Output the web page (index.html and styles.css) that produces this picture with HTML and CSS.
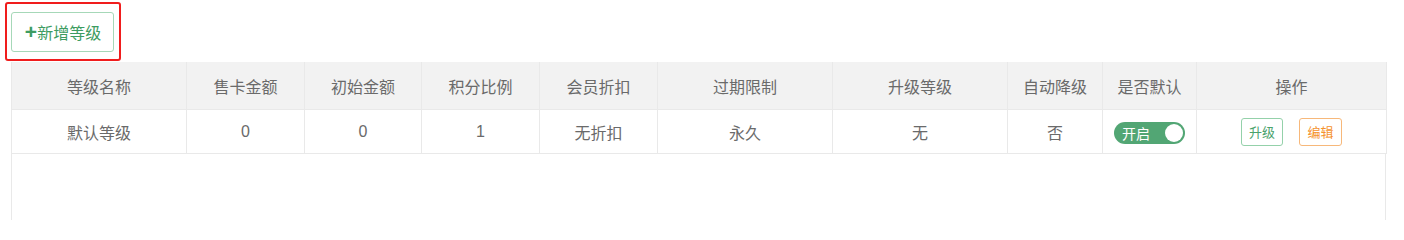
FILE: index.html
```html
<!DOCTYPE html>
<html lang="zh-CN">
<head>
<meta charset="utf-8">
<title>会员等级</title>
<link rel="stylesheet" href="styles.css">
</head>
<body>
<div class="page">
  <div class="toolbar">
    <div class="annot">
      <button class="btn-add"><span class="plus">+</span>新增等级</button>
    </div>
  </div>
  <div class="grid">
    <table class="tbl">
      <colgroup>
        <col class="c175"><col class="c118"><col class="c117"><col class="c118"><col class="c118">
        <col class="c175"><col class="c175"><col class="c95"><col class="c94"><col class="c190">
      </colgroup>
      <thead>
        <tr>
          <th>等级名称</th><th>售卡金额</th><th>初始金额</th><th>积分比例</th><th>会员折扣</th>
          <th>过期限制</th><th>升级等级</th><th>自动降级</th><th>是否默认</th><th>操作</th>
        </tr>
      </thead>
      <tbody>
        <tr>
          <td>默认等级</td><td class="num">0</td><td class="num">0</td><td class="num">1</td><td>无折扣</td>
          <td>永久</td><td>无</td><td>否</td>
          <td><span class="switch"><span class="switch-text">开启</span><span class="knob"></span></span></td>
          <td><div class="ops"><span class="op op-green">升级</span><span class="op op-orange">编辑</span></div></td>
        </tr>
      </tbody>
    </table>
    <div class="empty"></div>
  </div>
</div>
</body>
</html>
```

FILE: styles.css
```css
html, body {
  margin: 0;
  padding: 0;
  background: #ffffff;
}
body {
  font-family: "Noto Sans CJK SC", "Noto Sans", sans-serif;
  color: #666666;
}
.page {
  padding: 2px 0 0 5px;
}
.toolbar {
  display: flex;
}
.annot {
  border: 2px solid #f01d1d;
  border-radius: 3px;
  padding: 8px 5px 7px 4px;
  display: flex;
}
.btn-add {
  box-sizing: border-box;
  width: 103px;
  height: 40px;
  border: 1px solid #a6d8b8;
  border-radius: 3px;
  background: #ffffff;
  color: #3d9c61;
  font-family: "Noto Sans CJK SC", sans-serif;
  font-size: 16px;
  display: flex;
  align-items: center;
  justify-content: center;
  padding: 0 0 0 1px;
}
.plus {
  font-family: "Liberation Sans", sans-serif;
  font-weight: bold;
  font-size: 21px;
  line-height: 1;
  margin-top: -2px;
}
.grid {
  margin: 1px 0 0 6px;
  width: 1375px;
}
.tbl {
  width: 1375px;
  table-layout: fixed;
  border-collapse: collapse;
}
.c175 { width: 175px; }
.c118 { width: 118px; }
.c117 { width: 117px; }
.c95 { width: 95px; }
.c94 { width: 94px; }
.c190 { width: 190px; }
.tbl th, .tbl td {
  border: 1px solid #e9e9e9;
  text-align: center;
  font-weight: normal;
  font-size: 16px;
  color: #6a6a6a;
  padding: 0;
}
.tbl th {
  background: #f2f2f2;
  height: 47px;
  border-top: none;
}
.tbl td {
  height: 43px;
  background: #ffffff;
}
.tbl td.num {
  font-family: "Liberation Sans", sans-serif;
  font-size: 16px;
}
.switch {
  display: inline-flex;
  align-items: center;
  box-sizing: border-box;
  width: 71px;
  height: 22px;
  border-radius: 11px;
  background: #52a674;
  padding: 0 2px 0 8px;
  vertical-align: middle;
}
.switch-text {
  color: #ffffff;
  font-size: 14px;
  line-height: 1;
}
.knob {
  margin-left: auto;
  width: 18px;
  height: 18px;
  border-radius: 50%;
  background: #ffffff;
}
.ops {
  display: flex;
  justify-content: center;
  gap: 16px;
}
.op {
  box-sizing: border-box;
  width: 42px;
  height: 28px;
  border-radius: 3px;
  display: flex;
  align-items: center;
  justify-content: center;
  font-size: 13px;
  background: #ffffff;
}
.op-green {
  border: 1px solid #94d1aa;
  color: #4aa26c;
}
.op-orange {
  border: 1px solid #f7b87a;
  color: #f5922c;
  width: 43px;
}
.empty {
  box-sizing: border-box;
  height: 66px;
  border-left: 1px solid #e9e9e9;
  border-right: 1px solid #e9e9e9;
}
```
